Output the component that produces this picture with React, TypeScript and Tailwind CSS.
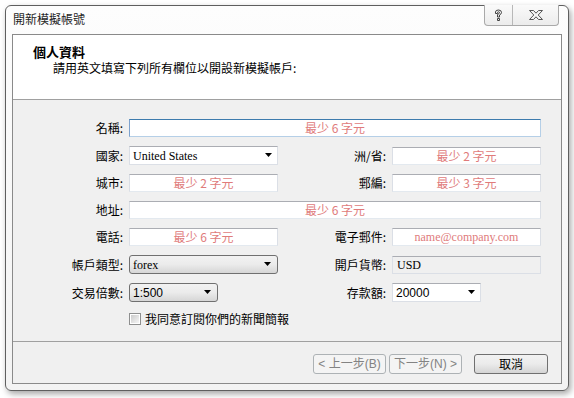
import React from "react";

const cjk = "font-['Noto_Sans_CJK_TC','Noto_Sans_CJK_SC',sans-serif]";
const serif = "font-['Liberation_Serif','Noto_Sans_CJK_TC',serif]";
const sans = "font-['Liberation_Sans','Noto_Sans_CJK_TC',sans-serif]";

function Arrow() {
  return (
    <svg width="8" height="5" viewBox="0 0 8 5" className="shrink-0">
      <path d="M0 0h7L3.5 4z" fill="#000" />
    </svg>
  );
}

function TextBox({ text, focus, email, span }: any) {
  return (
    <div
      className={`h-[18px] bg-white border flex items-center justify-center text-[12px] leading-none text-[#e07b7b] ${
        focus
          ? "border-[#7da2ce] border-t-[#3d7bad] border-b-[#b5cfe7] border-r-[#b5cfe7]"
          : "border-[#dbdfe6] border-t-[#abadb3] border-b-[#e3e9ef]"
      } ${email ? serif : cjk} ${span ? "col-span-3" : ""}`}
    >
      {text}
    </div>
  );
}

function Label({ children }: any) {
  return (
    <div className={`text-right text-[12px] leading-none text-black whitespace-nowrap ${cjk}`}>
      {children}
    </div>
  );
}

function Combo({ value, width, font }: any) {
  return (
    <div
      className={`h-[19px] bg-white border border-[#dbdfe6] border-t-[#abadb3] flex items-center justify-between pl-[3px] pr-[4px] text-[12px] leading-none text-black ${width} ${font}`}
    >
      <span>{value}</span>
      <Arrow />
    </div>
  );
}

function DropButton({ value, width, font }: any) {
  return (
    <div
      className={`h-[19px] rounded-[3px] border border-[#707070] bg-gradient-to-b from-[#f2f2f2] via-[#ebebeb] to-[#d6d6d6] flex items-center justify-between pl-[3px] pr-[5px] text-[12px] leading-none text-black ${width} ${font}`}
    >
      <span>{value}</span>
      <Arrow />
    </div>
  );
}

export default function App() {
  return (
    <div className="w-[574px] h-[398px] bg-white overflow-hidden pt-[5px] pl-[5px]">
      <div className="relative w-[564px] h-[386px] rounded-[6px] border border-[#5f5f5f] bg-gradient-to-b from-[#fdfdfd] to-[#f3f3f3] shadow-[2px_3px_6px_rgba(0,0,0,0.35)] flex flex-col">
        {/* title bar */}
        <div className={`h-[28px] flex items-center pl-[7px] pb-[2px] text-[12px] text-[#1e1e1e] ${cjk}`}>
          開新模擬帳號
        </div>
        <div className="absolute top-[-1px] right-[9px] w-[75px] h-[21px] flex border border-[#a9a9a9] border-t-0 rounded-b-[4px] bg-gradient-to-b from-[#fafafa] to-[#ececec]">
          <div className="w-[28px] border-r border-[#b8b8b8] flex items-center justify-center">
            <svg width="9" height="13" viewBox="0 0 9 13">
              <path
                d="M1.5 4.5V3Q1.5 1 4.5 1T7.5 3.5Q7.5 5 5.5 6V8H3.5V5.5Q5.5 4.7 5.5 3.5Q5.5 2.8 4.5 2.8T3.5 3.5V4.5ZM3.5 9.5H5.5V11.5H3.5Z"
                fill="none"
                stroke="#404040"
                strokeWidth="1"
              />
            </svg>
          </div>
          <div className="flex-1 flex items-center justify-center">
            <svg width="14" height="10" viewBox="0 0 14 10">
              <path
                d="M.5 .5H4.5L7 3.2L9.5 .5H13.5L9.2 5L13.5 9.5H9.5L7 6.8L4.5 9.5H.5L4.8 5Z"
                fill="#f4f4f4"
                stroke="#555"
                strokeWidth="1"
              />
            </svg>
          </div>
        </div>

        {/* panel */}
        <div className="mx-[6px] h-[350px] border border-[#8a8a8a] flex flex-col bg-[#f0f0f0]">
          <div className="h-[65px] bg-white border-b border-[#a0a0a0] pt-[8px]">
            <div className={`pl-[20px] text-[13px] leading-[17px] font-bold text-black ${cjk}`}>個人資料</div>
            <div className={`pl-[40px] text-[12px] leading-[16px] text-black ${cjk}`}>
              請用英文填寫下列所有欄位以開設新模擬帳戶:
            </div>
          </div>

          <div className="flex-1 flex flex-col pt-[19px]">
            <div className="grid grid-cols-[110px_149px_102px_149px] gap-x-[6px] gap-y-[9px] items-center">
              <Label>名稱:</Label>
              <TextBox text="最少 6 字元" focus span />

              <Label>國家:</Label>
              <Combo value="United States" width="w-[149px]" font={serif} />
              <Label>洲/省:</Label>
              <TextBox text="最少 2 字元" />

              <Label>城市:</Label>
              <TextBox text="最少 2 字元" />
              <Label>郵編:</Label>
              <TextBox text="最少 3 字元" />

              <Label>地址:</Label>
              <TextBox text="最少 6 字元" span />

              <Label>電話:</Label>
              <TextBox text="最少 6 字元" />
              <Label>電子郵件:</Label>
              <TextBox text="name@company.com" email />

              <Label>帳戶類型:</Label>
              <DropButton value="forex" width="w-[149px]" font={serif} />
              <Label>開戶貨幣:</Label>
              <div
                className={`h-[18px] bg-[#f0f0f0] border border-[#dbdfe6] border-t-[#abadb3] flex items-center pl-[4px] text-[12px] leading-none text-black ${serif}`}
              >
                USD
              </div>

              <Label>交易倍數:</Label>
              <DropButton value="1:500" width="w-[89px]" font={sans} />
              <Label>存款額:</Label>
              <Combo value="20000" width="w-[89px]" font={sans} />
            </div>

            <div className="mt-[11px] ml-[116px] flex items-center gap-[4px]">
              <div className="w-[12px] h-[12px] border border-[#8e8f8f] bg-white p-[1px]">
                <div className="w-full h-full bg-gradient-to-br from-[#cbcbcb] to-[#f6f6f6]" />
              </div>
              <span className={`text-[12px] leading-none text-black ${cjk}`}>我同意訂閱你們的新聞簡報</span>
            </div>

            <div className="flex-1" />
            <div className="border-t border-[#a0a0a0]" />
            <div className="h-[41px] flex items-start justify-end pt-[12px] pr-[13px]">
              <div
                className={`w-[73px] h-[20px] rounded-[3px] border border-[#adb2b5] bg-[#f4f4f4] flex items-center justify-center text-[12px] leading-none text-[#838383] ${sans}`}
              >
                &lt; 上一步(B)
              </div>
              <div
                className={`ml-[3px] w-[73px] h-[20px] rounded-[3px] border border-[#adb2b5] bg-[#f4f4f4] flex items-center justify-center text-[12px] leading-none text-[#838383] ${sans}`}
              >
                下一步(N) &gt;
              </div>
              <div
                className={`ml-[12px] w-[74px] h-[20px] rounded-[3px] border border-[#707070] bg-gradient-to-b from-[#f2f2f2] via-[#ebebeb] to-[#d4d4d4] flex items-center justify-center text-[12px] leading-none text-black ${cjk}`}
              >
                取消
              </div>
            </div>
          </div>
        </div>
      </div>
    </div>
  );
}
